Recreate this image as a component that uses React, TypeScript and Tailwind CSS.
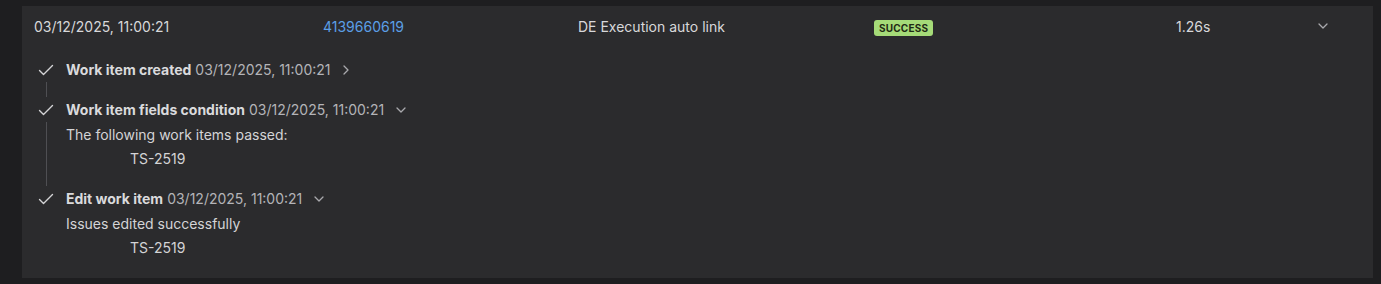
import React from "react";

const Check = () => (
  <svg width="16" height="12" viewBox="0 0 16 12" fill="none">
    <polyline points="1.5,6.5 5.5,10.5 14.5,1.5" stroke="#d4d4d6" strokeWidth="1.4" strokeLinecap="round" strokeLinejoin="round" />
  </svg>
);

const ChevronDown = ({ color = "#a9a9ad" }: { color?: string }) => (
  <svg width="10" height="6" viewBox="0 0 10 6" fill="none">
    <polyline points="1,1 5,5 9,1" stroke={color} strokeWidth="1.3" strokeLinecap="round" strokeLinejoin="round" />
  </svg>
);

const ChevronRight = () => (
  <svg width="6" height="10" viewBox="0 0 6 10" fill="none">
    <polyline points="1,1 5,5 1,9" stroke="#a9a9ad" strokeWidth="1.3" strokeLinecap="round" strokeLinejoin="round" />
  </svg>
);

type Step = {
  title: string;
  open: boolean;
  lines?: string[];
  items?: string[];
  connector: boolean;
};

const steps: Step[] = [
  { title: "Work item created", open: false, connector: true },
  { title: "Work item fields condition", open: true, lines: ["The following work items passed:"], items: ["TS-2519"], connector: true },
  { title: "Edit work item", open: true, lines: ["Issues edited successfully"], items: ["TS-2519"], connector: false },
];

export default function App() {
  return (
    <div
      className="w-[1381px] h-[284px] bg-[#1e1e20] pt-[6px] pl-[22px]"
      style={{ fontFamily: "Inter, 'Noto Sans', sans-serif" }}
    >
      <div className="w-[1351px] h-[272px] bg-[#2b2b2d]">
        <div className="h-10 flex items-center px-3 text-[14px] text-[#d8d8da]">
          <div className="w-[289px]">03/12/2025, 11:00:21</div>
          <div className="w-[255px] text-[#5b9fe6]">4139660619</div>
          <div className="w-[296px]">DE Execution auto link</div>
          <div className="w-[302px]">
            <span className="inline-flex items-center h-4 px-[5px] rounded-[3px] bg-[#a5db78] text-[#1f2a14] text-[10px] font-bold tracking-[0.02em] leading-none">
              SUCCESS
            </span>
          </div>
          <div className="w-[142px]">1.26s</div>
          <div className="flex items-center">
            <ChevronDown />
          </div>
        </div>
        <div className="pt-[14px] pl-4">
          {steps.map((s, i) => (
            <div key={i} className="flex">
              <div className="w-4 flex flex-col items-center">
                <div className="h-5 flex items-center">
                  <Check />
                </div>
                {s.connector && <div className="w-px flex-1 bg-[#4f4f53] mt-0.5 mb-[3px]" />}
              </div>
              <div className="ml-3 pb-5 text-[14px] leading-5">
                <div className="h-5 flex items-center">
                  <span className="font-bold text-[#dadadc]">{s.title}</span>
                  <span className="ml-1 text-[#b4b4b8]">03/12/2025, 11:00:21</span>
                  <span className="ml-3 flex items-center">
                    {s.open ? <ChevronDown /> : <ChevronRight />}
                  </span>
                </div>
                {s.lines?.map((l, j) => (
                  <div key={j} className="mt-[5px] text-[#d4d4d6]">{l}</div>
                ))}
                {s.items?.map((it, j) => (
                  <div key={j} className="mt-1 ml-16 text-[#d4d4d6]">{it}</div>
                ))}
              </div>
            </div>
          ))}
        </div>
      </div>
    </div>
  );
}
